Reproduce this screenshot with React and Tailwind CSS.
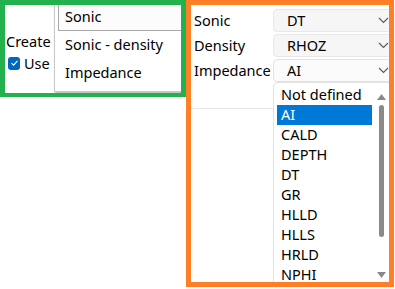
import React from 'react';

const font = { fontFamily: '"Noto Sans", "Open Sans", sans-serif' };

const Chevron = () => (
  <svg width="11" height="7" viewBox="0 0 11 7" className="text-[#5a5a5a]">
    <path d="M1 1 L5.5 5.5 L10 1" fill="none" stroke="currentColor" strokeWidth="1.1" />
  </svg>
);

const Combo = ({ value, focused }) => (
  <div
    className={
      'flex items-center justify-between shrink-0 h-[23px] w-[121px] rounded-[4px] border pl-[13px] pr-[4px] ' +
      (focused ? 'bg-[#fbfbfb] border-[#e3e3e3]' : 'bg-[#f6f6f6] border-[#e8e8e8]')
    }
  >
    <span className="leading-none">{value}</span>
    <Chevron />
  </div>
);

const channels = ['Not defined', 'AI', 'CALD', 'DEPTH', 'DT', 'GR', 'HLLD', 'HLLS', 'HRLD', 'NPHI'];

const App = () => {
  return (
    <div className="flex items-start bg-white w-[395px] h-[289px] text-[14.5px] text-black" style={font}>
      {/* left panel */}
      <div className="relative w-[186px] h-[97px] border-[5px] border-b-[4px] border-[#22b14c] bg-white overflow-hidden shrink-0">
        <div className="pt-[26px] pl-[1px] flex flex-col gap-[2px]">
          <div className="h-[20px] leading-[20px]">Create</div>
          <div className="flex items-center gap-[4px] h-[20px]">
            <span className="ml-[2px] w-[12px] h-[13px] rounded-[3px] bg-[#0067c0] flex items-center justify-center">
              <svg width="9" height="8" viewBox="0 0 9 8">
                <path d="M1.5 4.2 L3.6 6.2 L7.5 1.8" fill="none" stroke="white" strokeWidth="1.1" />
              </svg>
            </span>
            <span className="leading-[20px]">Use</span>
          </div>
        </div>

        {/* open menu */}
        <div className="absolute left-[49px] top-[-3px] w-[140px] h-[90px] bg-white border border-[#c8c8c8] shadow-[1px_2px_2px_rgba(0,0,0,0.25)]">
          <div className="ml-[3px] h-[28px] flex items-center pl-[6px] border border-[#a8a8a8] bg-[#fcfcfc]">Sonic</div>
          <div className="ml-[3px] h-[28px] flex items-center pl-[7px]">Sonic - density</div>
          <div className="ml-[3px] h-[28px] flex items-center pl-[7px]">Impedance</div>
        </div>
      </div>

      {/* right panel */}
      <div className="relative w-[208px] h-[287px] border-[5px] border-[#ff7f27] bg-white overflow-hidden shrink-0">
        <div className="flex flex-col gap-[2px] pt-[4px]">
          <div className="flex items-center">
            <span className="w-[82px] shrink-0 pl-[3px]">Sonic</span>
            <Combo value="DT" />
          </div>
          <div className="flex items-center">
            <span className="w-[82px] shrink-0 pl-[3px]">Density</span>
            <Combo value="RHOZ" />
          </div>
          <div className="flex items-center">
            <span className="w-[82px] shrink-0 pl-[3px]">Impedance</span>
            <Combo value="AI" focused />
          </div>
        </div>
        <div className="mt-[26px] h-px bg-[#e6e6e6]" />

        {/* open dropdown */}
        <div className="absolute left-[82px] top-[77px] w-[125px] h-[215px] bg-white border border-[#e2e2e2] rounded-[5px] flex">
          <div className="w-[101px] pt-[2px] pl-[3px]">
            {channels.map((c) => (
              <div
                key={c}
                className={
                  'h-[20px] flex items-center pl-[4px] w-[95px] ' +
                  (c === 'AI' ? 'bg-[#0078d7] text-white' : '')
                }
              >
                {c}
              </div>
            ))}
          </div>
          <div className="w-[12px] flex flex-col items-center pt-[11px]">
            <svg width="9" height="6" viewBox="0 0 9 6">
              <path d="M4.5 0 L9 6 L0 6 Z" fill="#8a8a8a" />
            </svg>
            <div className="mt-[5px] w-[5px] h-[132px] rounded-full bg-[#8a8a8a]" />
            <svg width="9" height="6" viewBox="0 0 9 6" className="mt-[35px]">
              <path d="M0 0 L9 0 L4.5 6 Z" fill="#8a8a8a" />
            </svg>
          </div>
        </div>
      </div>
    </div>
  );
};

export default App;
